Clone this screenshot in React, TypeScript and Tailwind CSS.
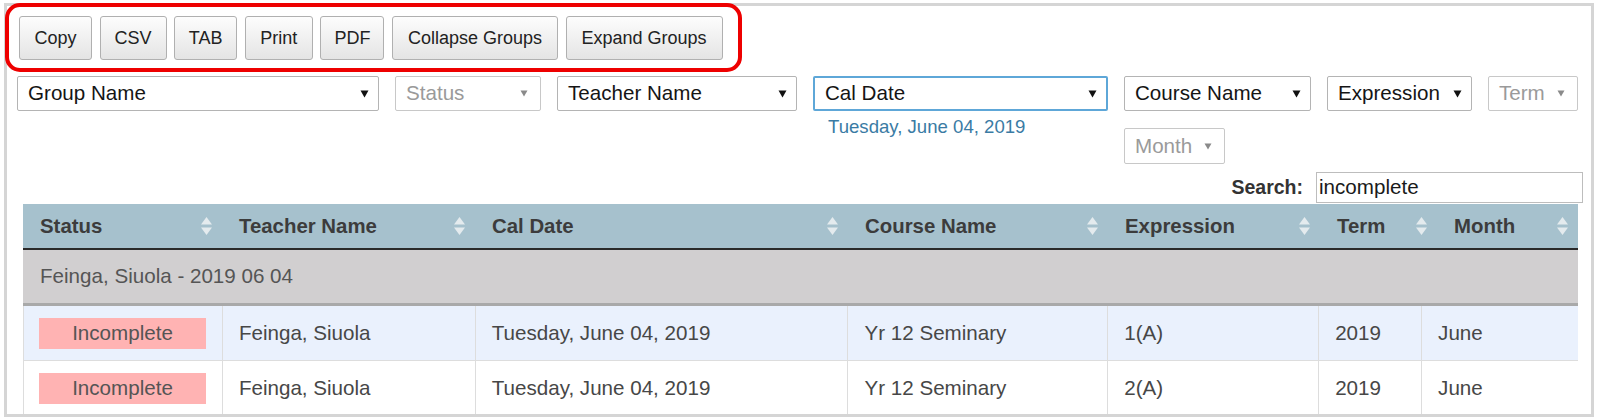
import React from 'react'

// 导出按钮
const buttons = [
  { label: 'Copy', w: 'w-[73px]' },
  { label: 'CSV', w: 'w-[67px]' },
  { label: 'TAB', w: 'w-[63px]' },
  { label: 'Print', w: 'w-[68px]' },
  { label: 'PDF', w: 'w-[64px]' },
  { label: 'Collapse Groups', w: 'w-[166px]' },
  { label: 'Expand Groups', w: 'w-[157px]' },
]

const headCols = [
  { label: 'Status', w: 'w-[199px]' },
  { label: 'Teacher Name', w: 'w-[253px]' },
  { label: 'Cal Date', w: 'w-[373px]' },
  { label: 'Course Name', w: 'w-[260px]' },
  { label: 'Expression', w: 'w-[212px]' },
  { label: 'Term', w: 'w-[117px]' },
  { label: 'Month', w: 'w-[141px]' },
]

const bodyWidths = ['w-[199px]', 'w-[253px]', 'w-[373px]', 'w-[260px]', 'w-[211px]', 'w-[103px]', 'w-[156px]']

const rows = [
  { teacher: 'Feinga, Siuola', date: 'Tuesday, June 04, 2019', course: 'Yr 12 Seminary', expr: '1(A)', term: '2019', month: 'June', bg: 'bg-[#eaf1fd]' },
  { teacher: 'Feinga, Siuola', date: 'Tuesday, June 04, 2019', course: 'Yr 12 Seminary', expr: '2(A)', term: '2019', month: 'June', bg: 'bg-white' },
]

function Arrow({ muted }: { muted?: boolean }) {
  return muted ? (
    <svg width="8" height="7" viewBox="0 0 8 7" className="shrink-0">
      <path d="M0.5 0.5h7L4 6.5z" fill="#8a8a8a" />
    </svg>
  ) : (
    <svg width="9" height="8" viewBox="0 0 9 8" className="shrink-0">
      <path d="M0.5 0.5h8L4.5 7.5z" fill="#111" />
    </svg>
  )
}

function Select({ label, w, muted, focused, h = 'h-[35px]' }: { label: string; w: string; muted?: boolean; focused?: boolean; h?: string }) {
  return (
    <div
      className={[
        'flex items-center justify-between bg-white rounded-[2px] pl-[10px] shrink-0',
        w,
        h,
        focused ? 'border-2 border-[#5ea7d8]' : 'border border-[#b4b4b4]',
        muted ? 'pr-[12px] text-[#9a9a9a] border-[#c8c8c8]' : 'pr-[9px] text-[#151515]',
      ].join(' ')}
    >
      <span className="text-[20.6px] leading-none">{label}</span>
      <Arrow muted={muted} />
    </div>
  )
}

function SortIcon() {
  return (
    <svg width="13" height="20" viewBox="0 0 13 20" className="shrink-0">
      <path d="M6.5 1L12 8.5H1z" fill="#e4ebee" />
      <path d="M1 11.5h11L6.5 19z" fill="#e4ebee" />
    </svg>
  )
}

export default function App() {
  return (
    <div className="relative w-[1601px] h-[420px] bg-white overflow-hidden pt-[3px] pl-[4px] font-['Liberation_Sans',Arial,sans-serif]">
      {/* 页面外框 */}
      <div className="w-[1590px] h-[414px] border-[3px] border-[#d5d5d5] overflow-hidden pt-[10px] pl-[10px] pr-[8px]">
        {/* 按钮行 */}
        <div className="flex gap-[7.6px] ml-[2px] h-[44px]">
          {buttons.map((b) => (
            <div
              key={b.label}
              className={`${b.w} h-[44px] flex items-center justify-center rounded-[3px] border border-[#b0b0b0] bg-gradient-to-b from-[#fdfdfd] to-[#e4e4e4] text-[18px] text-[#222]`}
            >
              {b.label}
            </div>
          ))}
        </div>

        {/* 过滤器 */}
        <div className="flex items-start gap-4 mt-4">
          <Select label="Group Name" w="w-[362px]" />
          <Select label="Status" w="w-[146px]" muted />
          <Select label="Teacher Name" w="w-[240px]" />
          <div className="w-[295px] shrink-0">
            <Select label="Cal Date" w="w-[295px]" focused />
            <div className="mt-[5px] pl-[15px] text-[18.6px] leading-[22px] text-[#3a7ba4]">Tuesday, June 04, 2019</div>
          </div>
          <div className="w-[456px] flex flex-wrap gap-x-4 gap-y-[17px]">
            <Select label="Course Name" w="w-[187px]" />
            <Select label="Expression" w="w-[145px]" />
            <Select label="Term" w="w-[90px]" muted />
            <Select label="Month" w="w-[101px]" h="h-[36px]" muted />
          </div>
        </div>

        {/* 搜索 */}
        <div className="flex items-center justify-end gap-[13px] mt-[8px] h-[31px]">
          <span className="text-[19.5px] font-bold text-[#333]">Search:</span>
          <div className="w-[267px] h-[31px] border border-[#bdbdbd] flex items-center pl-[2px] text-[20.6px] text-[#1a1a1a]">
            incomplete
          </div>
        </div>

        {/* 表格 */}
        <div className="mt-[1px] ml-[6px] w-[1555px]">
          <div className="flex h-[46px] bg-[#a6c1cd] border-b-2 border-[#2a2a2a]">
            {headCols.map((c) => (
              <div key={c.label} className={`${c.w} flex items-center justify-between pl-[17px] pr-[9px]`}>
                <span className="text-[20.4px] font-bold text-[#3c3c3c]">{c.label}</span>
                <SortIcon />
              </div>
            ))}
          </div>
          <div className="h-[56px] bg-[#d1cfd0] border-b-[3px] border-[#a9a9a9] flex items-center pl-[17px] text-[20.6px] text-[#555]">
            Feinga, Siuola - 2019 06 04
          </div>
          {rows.map((r, i) => {
            const cells = [r.teacher, r.date, r.course, r.expr, r.term, r.month]
            return (
              <div key={i} className={`flex h-[55px] border-b border-l border-[#dddddd] ${r.bg}`}>
                <div className={`${bodyWidths[0]} flex items-center pl-[15px] border-r border-[#dddddd]`}>
                  <div className="w-[167px] h-[31px] bg-[#ffb3b3] flex items-center justify-center text-[20.6px] text-[#555]">
                    Incomplete
                  </div>
                </div>
                {cells.map((c, j) => (
                  <div
                    key={j}
                    className={`${bodyWidths[j + 1]} flex items-center pl-4 text-[20.6px] text-[#474747] ${j < 5 ? 'border-r border-[#dddddd]' : ''}`}
                  >
                    {c}
                  </div>
                ))}
              </div>
            )
          })}
        </div>
      </div>

      {/* 红色标注框 */}
      <div className="absolute left-[5px] top-[3px] w-[737px] h-[69px] border-4 border-[#ee0000] rounded-[15px]" />
    </div>
  )
}
